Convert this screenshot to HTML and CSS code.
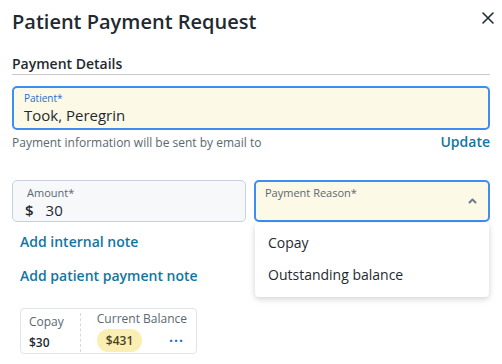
FILE: index.html
```html
<!DOCTYPE html>
<html lang="en">
<head>
    <meta charset="UTF-8">
    <meta name="viewport" content="width=device-width, initial-scale=1.0">
    <title>Patient Payment Request</title>
    <link rel="stylesheet" href="styles.css">
</head>

<body>
    <div class="dialog">
        <!-- Header -->
        <div class="dialog-header">
            <h1>Patient Payment Request</h1>
            <button class="close" aria-label="Close">
                <svg width="12" height="12" viewBox="0 0 12 12">
                    <path d="M1 1 L11 11 M11 1 L1 11" stroke="#1f2a30" stroke-width="1.6" stroke-linecap="round"/>
                </svg>
            </button>
        </div>

        <h2 class="section-title">Payment Details</h2>

        <!-- Patient -->
        <div class="field field-focus patient-field">
            <label class="field-label blue">Patient*</label>
            <div class="field-value">Took, Peregrin</div>
        </div>
        <div class="helper-row">
            <span class="helper">Payment information will be sent by email to</span>
            <a class="link" href="#">Update</a>
        </div>

        <!-- Amount / Reason -->
        <div class="form-grid">
            <div class="left-col">
                <div class="field amount-field">
                    <label class="field-label">Amount*</label>
                    <div class="field-value"><span class="currency">$</span>30</div>
                </div>
                <a class="link note-link first" href="#">Add internal note</a>
                <a class="link note-link" href="#">Add patient payment note</a>

                <div class="balance-card">
                    <div class="balance-cell copay">
                        <div class="balance-label">Copay</div>
                        <div class="balance-amount">$30</div>
                    </div>
                    <div class="balance-cell current">
                        <div class="balance-label">Current Balance</div>
                        <div class="balance-bottom">
                            <span class="pill">$431</span>
                            <span class="more">&middot;&middot;&middot;</span>
                        </div>
                    </div>
                </div>
            </div>

            <div class="right-col">
                <div class="field field-focus reason-field">
                    <label class="field-label">Payment Reason*</label>
                    <svg class="chevron" width="9" height="6" viewBox="0 0 9 6">
                        <path d="M1.5 4.5 L4.5 1.5 L7.5 4.5" fill="none" stroke="#6b7c86" stroke-width="2" stroke-linecap="round" stroke-linejoin="round"/>
                    </svg>
                </div>
                <ul class="dropdown">
                    <li>Copay</li>
                    <li>Outstanding balance</li>
                </ul>
            </div>
        </div>
    </div>
</body>
</html>
```

FILE: styles.css
```css
/* styles.css */
body {
    font-family: "Open Sans", "Noto Sans", Arial, sans-serif;
    margin: 0;
    padding: 0;
    background-color: #fff;
    color: #1f2a30;
}

.dialog {
    padding: 0 12px;
}

.dialog-header {
    display: flex;
    justify-content: space-between;
    align-items: center;
    padding-top: 8px;
}

.dialog-header h1 {
    font-size: 20px;
    font-weight: 600;
    line-height: 28px;
    margin: 0;
    color: #1f2a30;
}

.close {
    border: none;
    background: none;
    padding: 0;
    margin-right: -4px;
    margin-top: -6px;
    cursor: pointer;
}

.section-title {
    font-size: 14px;
    font-weight: 600;
    line-height: 20px;
    margin: 18px 0 0;
    padding-bottom: 0;
    border-bottom: 1px solid #c9c9c9;
    color: #1f2a30;
}

.field {
    position: relative;
    box-sizing: border-box;
    border-radius: 5px;
    padding: 5px 12px;
}

.field-focus {
    border: 2px solid #3d8ef0;
    background-color: #fdf9e7;
}

.patient-field {
    margin-top: 11px;
    height: 44px;
    padding: 4px 10px;
}

.field-label {
    display: block;
    font-size: 10px;
    line-height: 13px;
    color: #5b6870;
}

.field-label.blue {
    color: #1c6fd1;
}

.field-value {
    font-size: 15px;
    line-height: 20px;
    color: #1f2a30;
}

.helper-row {
    display: flex;
    justify-content: space-between;
    align-items: baseline;
    margin-top: 2px;
}

.helper {
    font-size: 12px;
    color: #5b6870;
}

.link {
    font-size: 14px;
    font-weight: 600;
    color: #11769f;
    text-decoration: none;
}

.form-grid {
    display: grid;
    grid-template-columns: 234px 1fr;
    gap: 8px;
    margin-top: 29px;
}

.left-col {
    display: flex;
    flex-direction: column;
    align-items: flex-start;
}

.amount-field {
    width: 100%;
    height: 42px;
    border: 1px solid #c6d1dc;
    background-color: #f6f8fa;
    padding: 5px 12px;
}

.amount-field .field-label {
    font-size: 11px;
    padding-left: 2px;
}

.amount-field .field-value {
    margin-top: 1px;
}

.currency {
    font-weight: 600;
    margin-right: 12px;
}

.note-link {
    margin-left: 8px;
    line-height: 20px;
}

.note-link.first {
    margin-top: 10px;
}

.note-link + .note-link {
    margin-top: 14px;
}

.balance-card {
    display: flex;
    margin: 22px 0 0 8px;
    border: 1px solid #e1e5e9;
    border-radius: 4px;
    padding: 1px 9px 1px 8px;
}

.balance-cell.copay {
    padding: 2px 16px 0 0;
    border-right: 1px dashed #d3dadf;
    margin: 3px 0 0;
}

.balance-cell.current {
    padding-left: 16px;
}

.balance-label {
    font-size: 12px;
    line-height: 17px;
    color: #5b6870;
}

.copay .balance-label {
    margin-top: -2px;
}

.balance-amount {
    font-size: 12px;
    font-weight: 600;
    line-height: 18px;
    margin-top: 4px;
    color: #1f2a30;
}

.balance-bottom {
    display: flex;
    align-items: center;
    justify-content: space-between;
    margin-top: 2px;
}

.pill {
    background-color: #fbeeb3;
    border-radius: 12px;
    padding: 2px 9px;
    font-size: 12px;
    font-weight: 600;
    line-height: 19px;
    color: #4a4322;
}

.more {
    color: #1c6fd1;
    font-weight: 700;
    font-size: 14px;
    letter-spacing: 1px;
    margin-right: 3px;
}

.right-col {
    position: relative;
}

.reason-field {
    height: 42px;
    padding: 4px 9px;
}

.reason-field .field-label {
    font-size: 11px;
}

.chevron {
    position: absolute;
    right: 11px;
    top: 16px;
}

.dropdown {
    position: absolute;
    top: 43px;
    left: 1px;
    right: 1px;
    list-style: none;
    margin: 0;
    padding: 4px 0 6px;
    background-color: #fff;
    border-radius: 4px;
    box-shadow: 0 2px 6px rgba(0, 0, 0, 0.18);
}

.dropdown li {
    font-size: 14px;
    line-height: 32px;
    padding: 0 13px;
    color: #1f2a30;
}
```
